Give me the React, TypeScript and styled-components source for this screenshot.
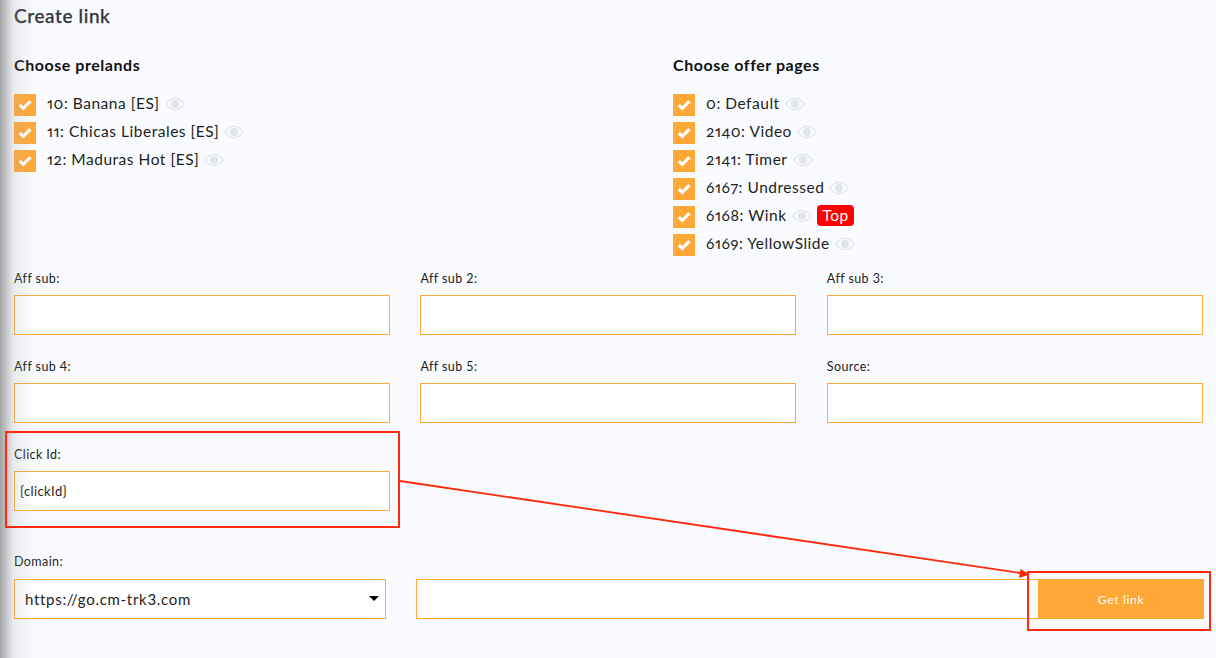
import styled, { createGlobalStyle } from "styled-components";

const prelands = ["10: Banana [ES]", "11: Chicas Liberales [ES]", "12: Maduras Hot [ES]"];
const offers = ["0: Default", "2140: Video", "2141: Timer", "6167: Undressed", "6168: Wink", "6169: YellowSlide"];
const affFields = ["Aff sub:", "Aff sub 2:", "Aff sub 3:", "Aff sub 4:", "Aff sub 5:", "Source:"];

const Eye = () => (
  <EyeIcon viewBox="0 0 20 14">
    <path d="M1 7C3.5 3.2 6.500 1.300 10 1.300S16.500 3.200 19 7C16.500 10.800 13.500 12.700 10 12.700S3.500 10.800 1 7Z" fill="none" stroke="#e1e4e8" strokeWidth="1.300" />
    <circle cx="10" cy="7" r="4" fill="#e1e4e8" />
  </EyeIcon>
);

const CheckRow = ({ label, top }: { label: string; top?: boolean }) => (
  <Row>
    <Box>
      <svg width="14" height="12" viewBox="0 0 14 12">
        <path d="M1.600 6L5.400 9.400L12.400 2.200" fill="none" stroke="#fff" strokeWidth="3.200" />
      </svg>
    </Box>
    <RowText>{label}</RowText>
    <Eye />
    {top && <TopBadge>Top</TopBadge>}
  </Row>
);

const Field = ({ label, value }: { label: string; value?: string }) => (
  <div>
    <FieldLabel>{label}</FieldLabel>
    <TextInput defaultValue={value} />
  </div>
);

const App = () => {
  return (
    <Page>
      <GlobalStyle />
      <Title>Create link</Title>
      <Choosers>
        <div>
          <ChooseHead>Choose prelands</ChooseHead>
          <List>
            {prelands.map((p) => (
              <CheckRow key={p} label={p} />
            ))}
          </List>
        </div>
        <div>
          <ChooseHead>Choose offer pages</ChooseHead>
          <List>
            {offers.map((o) => (
              <CheckRow key={o} label={o} top={o === "6168: Wink"} />
            ))}
          </List>
        </div>
      </Choosers>
      <FieldGrid>
        {affFields.map((f) => (
          <Field key={f} label={f} />
        ))}
        <Field label="Click Id:" value="{clickId}" />
      </FieldGrid>
      <DomainLabel>Domain:</DomainLabel>
      <DomainRow>
        <DomainSelect>
          https://go.cm-trk3.com
          <Caret />
        </DomainSelect>
        <LinkInput />
        <GetLink>Get link</GetLink>
      </DomainRow>

      <LeftShade />
      <ClickIdMark />
      <ButtonMark />
      <ArrowLayer viewBox="0 0 1216 658">
        <line x1="400" y1="481" x2="1020" y2="573" stroke="#ff2a0a" strokeWidth="1.800" />
        <path d="M1030 574.500L1019 578L1020.500 569Z" fill="#ff2a0a" />
      </ArrowLayer>
    </Page>
  );
};

export default App;

/* ===== styled-components ===== */

const GlobalStyle = createGlobalStyle`
  html, body {
    margin: 0;
    background: #f9fbff;
  }
`;

const Page = styled.div`
  position: relative;
  width: 1216px;
  height: 658px;
  padding: 5px 0 0 14px;
  box-sizing: border-box;
  overflow: hidden;
  background: #f9fbff;
  color: #17181a;
  font-family: "Lato", "Liberation Sans", sans-serif;
`;

const Title = styled.div`
  height: 22px;
  line-height: 22px;
  font-size: 19px;
  font-weight: 500;
  letter-spacing: 0.6px;
  -webkit-text-stroke: 0.25px #33363d;
  color: #33363d;
`;

const Choosers = styled.div`
  display: grid;
  grid-template-columns: 659px 1fr;
  margin-top: 27px;
`;

const ChooseHead = styled.div`
  height: 22px;
  line-height: 22px;
  font-size: 16px;
  font-weight: 700;
  letter-spacing: 0.55px;
  color: #111;
`;

const List = styled.div`
  display: flex;
  flex-direction: column;
  gap: 6px;
  margin-top: 18px;
`;

const Row = styled.div`
  display: flex;
  align-items: center;
  height: 22px;
`;

const Box = styled.div`
  display: flex;
  align-items: center;
  justify-content: center;
  width: 22px;
  height: 22px;
  background: #ffa836;
`;

const RowText = styled.span`
  margin: 0 0 4px 11px;
  font-size: 15.5px;
  font-variant-numeric: oldstyle-nums proportional-nums;
  letter-spacing: 0.52px;
  color: #1d1e20;
`;

const EyeIcon = styled.svg`
  width: 20px;
  height: 14px;
  margin: 0 0 2px 5px;
`;

const TopBadge = styled.span`
  margin: 0 0 4px 5px;
  padding: 0 6px;
  height: 21px;
  line-height: 21px;
  border-radius: 4px;
  background: #ff0000;
  color: #fff;
  font-size: 15.5px;
  letter-spacing: 0.4px;
`;

const FieldGrid = styled.div`
  display: grid;
  grid-template-columns: repeat(3, 376px);
  column-gap: 30.4px;
  row-gap: 24px;
  margin-top: 15px;
`;

const FieldLabel = styled.div`
  height: 24px;
  line-height: 16px;
  font-size: 12.5px;
  letter-spacing: 0.42px;
  color: #1d1e20;
`;

const TextInput = styled.input`
  display: block;
  width: 100%;
  height: 40px;
  padding: 0 5px;
  box-sizing: border-box;
  border: 1px solid #ffa836;
  border-radius: 0;
  outline: none;
  background: #fff;
  color: #1d1e20;
  font-family: "Lato", "Liberation Sans", sans-serif;
  font-size: 13px;
  letter-spacing: 0.4px;
`;

const DomainLabel = styled(FieldLabel)`
  height: 25px;
  margin-top: 43px;
`;

const DomainRow = styled.div`
  display: flex;
  align-items: stretch;
  height: 40px;
`;

const DomainSelect = styled.div`
  display: flex;
  align-items: center;
  justify-content: space-between;
  width: 372px;
  padding: 0 6px 0 10px;
  box-sizing: border-box;
  border: 1px solid #ffa836;
  background: #fff;
  font-size: 15px;
  letter-spacing: 0.7px;
  color: #1d1e20;
`;

const Caret = styled.span`
  width: 0;
  height: 0;
  margin-bottom: 2px;
  border-left: 5px solid transparent;
  border-right: 5px solid transparent;
  border-top: 5px solid #000;
`;

const LinkInput = styled.input`
  width: 622px;
  margin-left: 30px;
  box-sizing: border-box;
  border: 1px solid #ffa836;
  border-right: none;
  border-radius: 0;
  outline: none;
  background: #fff;
`;

const GetLink = styled.button`
  width: 166px;
  padding: 0;
  border: none;
  background: #ffa836;
  color: #fff;
  font-family: "Lato", "Liberation Sans", sans-serif;
  font-size: 12px;
  letter-spacing: 0.7px;
`;

const LeftShade = styled.div`
  position: absolute;
  left: 0;
  top: 0;
  bottom: 0;
  width: 34px;
  pointer-events: none;
  background: linear-gradient(to right, rgba(110, 110, 110, 0.62), rgba(170, 170, 170, 0.22) 38%, rgba(255, 255, 255, 0));
`;

const ClickIdMark = styled.div`
  position: absolute;
  left: 5px;
  top: 431px;
  width: 395px;
  height: 97px;
  box-sizing: border-box;
  border: 2px solid #ff2a0a;
  pointer-events: none;
`;

const ButtonMark = styled.div`
  position: absolute;
  left: 1027px;
  top: 571px;
  width: 184px;
  height: 60px;
  box-sizing: border-box;
  border: 2px solid #ff2a0a;
  pointer-events: none;
`;

const ArrowLayer = styled.svg`
  position: absolute;
  left: 0;
  top: 0;
  width: 1216px;
  height: 658px;
  pointer-events: none;
`;
